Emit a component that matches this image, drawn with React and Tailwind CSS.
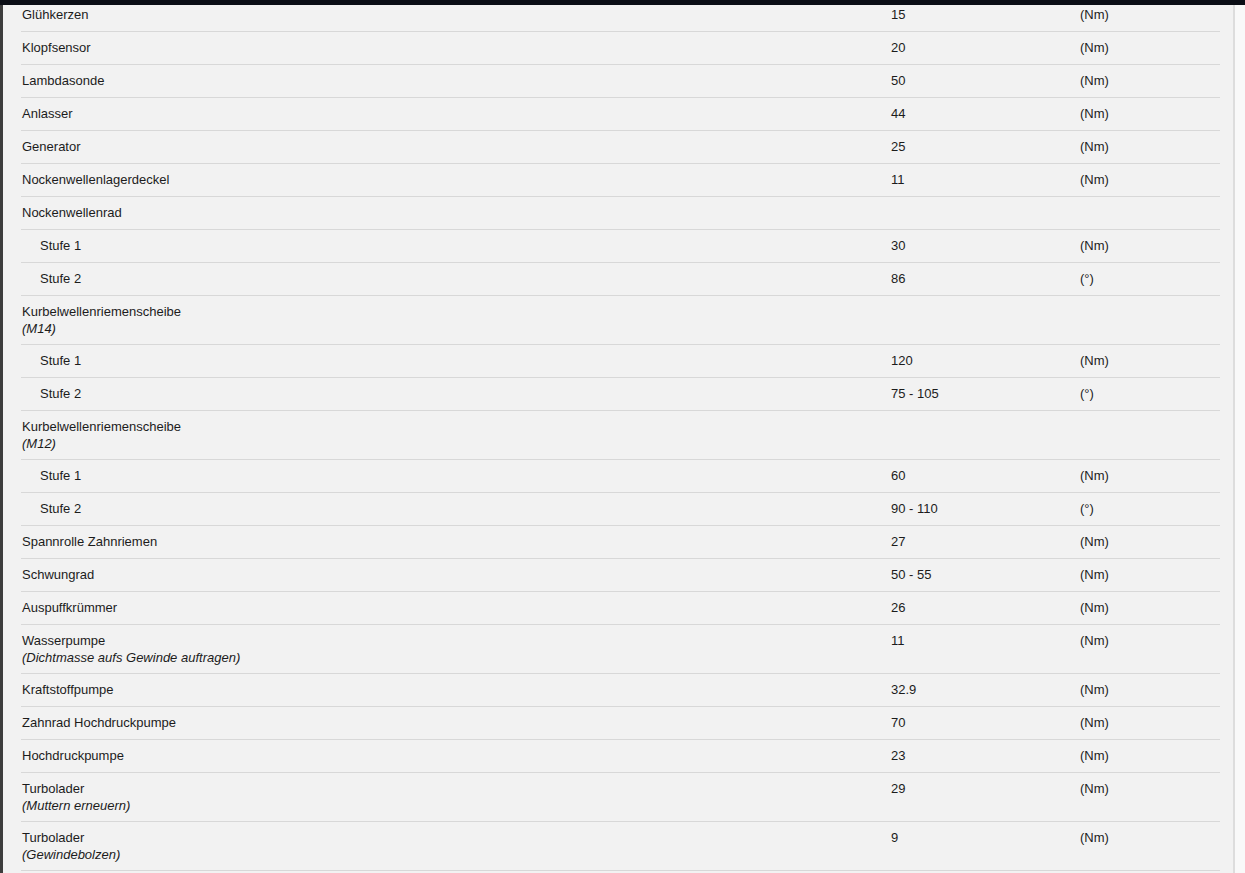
const ROWS = [
  { name: 'Glühkerzen', value: '15', unit: '(Nm)' },
  { name: 'Klopfsensor', value: '20', unit: '(Nm)' },
  { name: 'Lambdasonde', value: '50', unit: '(Nm)' },
  { name: 'Anlasser', value: '44', unit: '(Nm)' },
  { name: 'Generator', value: '25', unit: '(Nm)' },
  { name: 'Nockenwellenlagerdeckel', value: '11', unit: '(Nm)' },
  { name: 'Nockenwellenrad' },
  { name: 'Stufe 1', value: '30', unit: '(Nm)', sub: true },
  { name: 'Stufe 2', value: '86', unit: '(°)', sub: true },
  { name: 'Kurbelwellenriemenscheibe', note: '(M14)' },
  { name: 'Stufe 1', value: '120', unit: '(Nm)', sub: true },
  { name: 'Stufe 2', value: '75 - 105', unit: '(°)', sub: true },
  { name: 'Kurbelwellenriemenscheibe', note: '(M12)' },
  { name: 'Stufe 1', value: '60', unit: '(Nm)', sub: true },
  { name: 'Stufe 2', value: '90 - 110', unit: '(°)', sub: true },
  { name: 'Spannrolle Zahnriemen', value: '27', unit: '(Nm)' },
  { name: 'Schwungrad', value: '50 - 55', unit: '(Nm)' },
  { name: 'Auspuffkrümmer', value: '26', unit: '(Nm)' },
  { name: 'Wasserpumpe', note: '(Dichtmasse aufs Gewinde auftragen)', value: '11', unit: '(Nm)' },
  { name: 'Kraftstoffpumpe', value: '32.9', unit: '(Nm)' },
  { name: 'Zahnrad Hochdruckpumpe', value: '70', unit: '(Nm)' },
  { name: 'Hochdruckpumpe', value: '23', unit: '(Nm)' },
  { name: 'Turbolader', note: '(Muttern erneuern)', value: '29', unit: '(Nm)' },
  { name: 'Turbolader', note: '(Gewindebolzen)', value: '9', unit: '(Nm)' },
];

export default function App() {
  return (
    <div className="w-[1245px] h-[873px] overflow-hidden flex flex-col bg-[#f2f2f2] text-[13px] leading-[16px] text-[#1c1c1c]" style={{ fontFamily: '"Liberation Sans", Arial, sans-serif' }}>
      <div className="h-[5px] shrink-0 bg-[#0b0e16]" />
      <div className="flex flex-1 min-h-0">
        <div className="w-[3px] shrink-0 bg-[#3d3d3d]" />
        <div className="flex-1 pl-[18px] pr-[13px]">
          {ROWS.map((row, i) => (
            <div
              key={i}
              className={`grid grid-cols-[870px_189px_1fr] border-b border-[#d8d8d8] ${i === 0 ? 'pt-[2px]' : 'pt-2'} ${row.note ? 'pb-[7px]' : 'pb-2'}`}
            >
              <div className={row.sub ? 'pl-[19px]' : 'pl-px'}>
                <div>{row.name}</div>
                {row.note && <div className="italic leading-[17px]">{row.note}</div>}
              </div>
              <div>{row.value}</div>
              <div>{row.unit}</div>
            </div>
          ))}
        </div>
        <div className="w-[2px] shrink-0 bg-[#dddddd]" />
        <div className="w-[10px] shrink-0 bg-[#f9f9f9]" />
      </div>
    </div>
  );
}
